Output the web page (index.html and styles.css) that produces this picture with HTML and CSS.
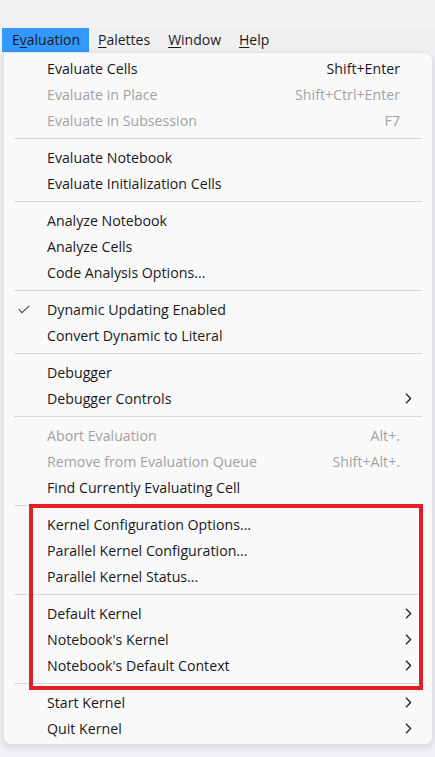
FILE: index.html
```html
<!DOCTYPE html>
<html>
<head>
<meta charset="utf-8">
<link rel="stylesheet" href="styles.css">
</head>
<body>
<div class="top"></div>
<div class="menubar">
  <span class="mb-item active">E<u>v</u>aluation</span>
  <span class="mb-item"><u>P</u>alettes</span>
  <span class="mb-item"><u>W</u>indow</span>
  <span class="mb-item"><u>H</u>elp</span>
</div>
<div class="menu">
  <div class="row"><span class="chk"></span><span class="lbl">Evaluate Cells</span><span class="sc">Shift+Enter</span><span class="arr"></span></div>
  <div class="row dis"><span class="chk"></span><span class="lbl">Evaluate in Place</span><span class="sc">Shift+Ctrl+Enter</span><span class="arr"></span></div>
  <div class="row dis"><span class="chk"></span><span class="lbl">Evaluate in Subsession</span><span class="sc">F7</span><span class="arr"></span></div>
  <div class="sep"></div>
  <div class="row"><span class="chk"></span><span class="lbl">Evaluate Notebook</span><span class="sc"></span><span class="arr"></span></div>
  <div class="row"><span class="chk"></span><span class="lbl">Evaluate Initialization Cells</span><span class="sc"></span><span class="arr"></span></div>
  <div class="sep"></div>
  <div class="row"><span class="chk"></span><span class="lbl">Analyze Notebook</span><span class="sc"></span><span class="arr"></span></div>
  <div class="row"><span class="chk"></span><span class="lbl">Analyze Cells</span><span class="sc"></span><span class="arr"></span></div>
  <div class="row"><span class="chk"></span><span class="lbl">Code Analysis Options...</span><span class="sc"></span><span class="arr"></span></div>
  <div class="sep"></div>
  <div class="row"><span class="chk"><svg width="12" height="9" viewBox="0 0 12 9"><polyline points="0.8,4.2 4,7.6 11.2,0.8" fill="none" stroke="#444" stroke-width="1.1"/></svg></span><span class="lbl">Dynamic Updating Enabled</span><span class="sc"></span><span class="arr"></span></div>
  <div class="row"><span class="chk"></span><span class="lbl">Convert Dynamic to Literal</span><span class="sc"></span><span class="arr"></span></div>
  <div class="sep"></div>
  <div class="row"><span class="chk"></span><span class="lbl">Debugger</span><span class="sc"></span><span class="arr"></span></div>
  <div class="row"><span class="chk"></span><span class="lbl">Debugger Controls</span><span class="sc"></span><span class="arr"><svg class="chev" width="7" height="11" viewBox="0 0 7 11"><polyline points="1,0.8 5.6,5.5 1,10.2" fill="none" stroke="#222" stroke-width="1.3"/></svg></span></div>
  <div class="sep"></div>
  <div class="row dis"><span class="chk"></span><span class="lbl">Abort Evaluation</span><span class="sc">Alt+.</span><span class="arr"></span></div>
  <div class="row dis"><span class="chk"></span><span class="lbl">Remove from Evaluation Queue</span><span class="sc">Shift+Alt+.</span><span class="arr"></span></div>
  <div class="row"><span class="chk"></span><span class="lbl">Find Currently Evaluating Cell</span><span class="sc"></span><span class="arr"></span></div>
  <div class="sep"></div>
  <div class="row"><span class="chk"></span><span class="lbl">Kernel Configuration Options...</span><span class="sc"></span><span class="arr"></span></div>
  <div class="row"><span class="chk"></span><span class="lbl">Parallel Kernel Configuration...</span><span class="sc"></span><span class="arr"></span></div>
  <div class="row"><span class="chk"></span><span class="lbl">Parallel Kernel Status...</span><span class="sc"></span><span class="arr"></span></div>
  <div class="sep"></div>
  <div class="row"><span class="chk"></span><span class="lbl">Default Kernel</span><span class="sc"></span><span class="arr"><svg class="chev" width="7" height="11" viewBox="0 0 7 11"><polyline points="1,0.8 5.6,5.5 1,10.2" fill="none" stroke="#222" stroke-width="1.3"/></svg></span></div>
  <div class="row"><span class="chk"></span><span class="lbl">Notebook's Kernel</span><span class="sc"></span><span class="arr"><svg class="chev" width="7" height="11" viewBox="0 0 7 11"><polyline points="1,0.8 5.6,5.5 1,10.2" fill="none" stroke="#222" stroke-width="1.3"/></svg></span></div>
  <div class="row"><span class="chk"></span><span class="lbl">Notebook's Default Context</span><span class="sc"></span><span class="arr"><svg class="chev" width="7" height="11" viewBox="0 0 7 11"><polyline points="1,0.8 5.6,5.5 1,10.2" fill="none" stroke="#222" stroke-width="1.3"/></svg></span></div>
  <div class="sep"></div>
  <div class="row"><span class="chk"></span><span class="lbl">Start Kernel</span><span class="sc"></span><span class="arr"><svg class="chev" width="7" height="11" viewBox="0 0 7 11"><polyline points="1,0.8 5.6,5.5 1,10.2" fill="none" stroke="#222" stroke-width="1.3"/></svg></span></div>
  <div class="row"><span class="chk"></span><span class="lbl">Quit Kernel</span><span class="sc"></span><span class="arr"><svg class="chev" width="7" height="11" viewBox="0 0 7 11"><polyline points="1,0.8 5.6,5.5 1,10.2" fill="none" stroke="#222" stroke-width="1.3"/></svg></span></div>
  <div class="highlight"></div>
</div>
</body>
</html>
```
FILE: styles.css
```css
html, body {
  margin: 0;
  padding: 0;
}
body {
  width: 435px;
  height: 757px;
  overflow: hidden;
  background: #f1f0f4;
  font-family: "Open Sans", "Noto Sans", sans-serif;
  color: #1a1a1a;
}
.top {
  height: 28px;
  background: #f2f2f5;
}
.menubar {
  height: 24px;
  display: flex;
  align-items: center;
  padding-left: 2px;
  background: #f0f0f2;
  font-size: 14px;
}
.mb-item {
  height: 24px;
  line-height: 24px;
  padding: 0 9px;
}
.mb-item.active {
  background: #3399ff;
  padding-left: 10px;
}
.mb-item u {
  text-decoration-thickness: 1px;
  text-underline-offset: 2px;
}
.menu {
  position: relative;
  margin-left: 3px;
  width: 428px;
  background: #f9f9f9;
  border: 1px solid #e2e2e2;
  border-radius: 0 8px 8px 8px;
  box-shadow: 0 2px 6px rgba(0, 0, 0, 0.12);
  padding: 2px 0 3px 0;
  font-size: 14.2px;
}
.row {
  height: 26px;
  display: grid;
  grid-template-columns: 43px 1fr auto 32px;
  align-items: center;
}
.row.dis {
  color: #a3a3a3;
}
.chk {
  display: flex;
  align-items: center;
  padding-left: 14px;
}
.sc {
  text-align: right;
}
.arr {
  display: flex;
  align-items: center;
  padding-left: 5px;
}
.sep {
  height: 11px;
  display: flex;
  align-items: center;
  padding: 0 10px 0 10px;
}
.sep::before {
  content: "";
  flex: 1;
  height: 1px;
  background: #d9d9d9;
}
.highlight {
  position: absolute;
  left: 25px;
  top: 451px;
  width: 386px;
  height: 178px;
  border: 4px solid #e41e26;
}
```
